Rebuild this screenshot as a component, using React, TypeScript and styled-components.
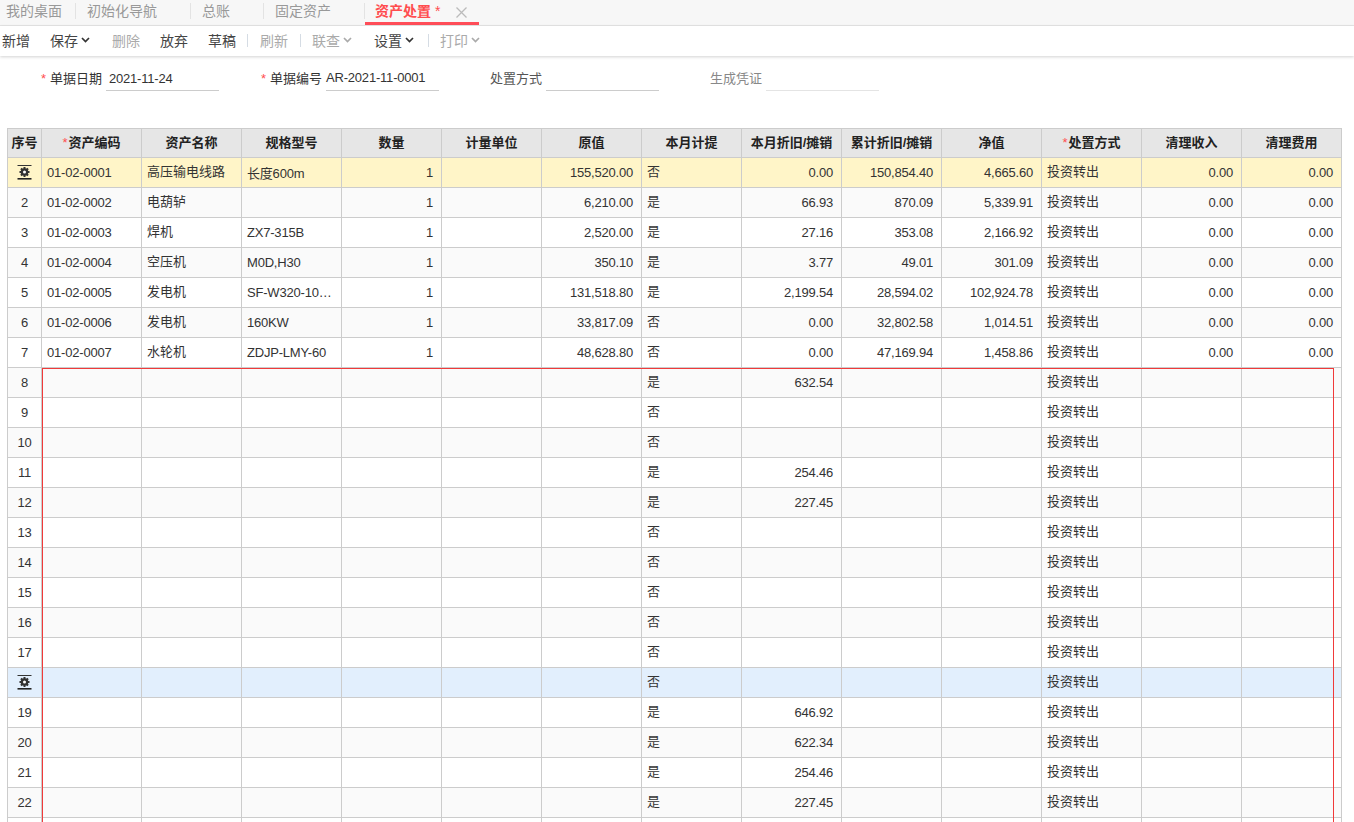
import { createGlobalStyle } from 'styled-components'
import styled from 'styled-components'

const GlobalStyle = createGlobalStyle`
  html, body {
    margin: 0;
    height: 100%;
    overflow: hidden;
    background: #fff;
    font-family: "Liberation Sans", "Noto Sans CJK SC", sans-serif;
    color: #333;
  }
`

const Page = styled.div`
  height: 822px;
  overflow: hidden;
`

const TabBar = styled.div`
  display: flex;
  height: 25px;
  background: #f7f7f7;
  border-bottom: 1px solid #e6e6e6;
`

const Tab = styled.div<{ $width: number; $first?: boolean; $active?: boolean }>`
  position: relative;
  box-sizing: border-box;
  width: ${({ $width }) => $width}px;
  display: flex;
  align-items: flex-start;
  gap: 16px;
  height: 25px;
  line-height: 22px;
  padding-left: ${({ $first, $active }) => ($first ? 6 : $active ? 10 : 11)}px;
  font-size: 14px;
  color: ${({ $active }) => ($active ? '#ff4d4f' : '#999')};
  font-weight: ${({ $active }) => ($active ? 700 : 400)};
  border-bottom: ${({ $active }) => ($active ? '3px solid #ff4d58' : 'none')};

  &::after {
    content: '';
    display: ${({ $active }) => ($active ? 'none' : 'block')};
    position: absolute;
    right: 0;
    top: 3px;
    height: 16px;
    width: 1px;
    background: #e3e3e3;
  }

  svg {
    margin-top: 7px;
  }
`

const TabStar = styled.span`
  font-weight: 400;
  margin-left: 4px;
`

const Toolbar = styled.div`
  display: flex;
  align-items: center;
  box-sizing: border-box;
  height: 30px;
  padding: 0 0 2px 2px;
  background: #fff;
  box-shadow: 0 1px 3px rgba(0, 0, 0, 0.18);
  position: relative;
`

const ToolButton = styled.div<{ $disabled?: boolean; $width: number }>`
  display: flex;
  align-items: center;
  gap: 3px;
  width: ${({ $width }) => $width}px;
  font-size: 14px;
  color: ${({ $disabled }) => ($disabled ? '#aaa' : '#444')};
`

const ToolDivider = styled.div<{ $width: number }>`
  width: ${({ $width }) => $width}px;

  &::before {
    content: '';
    display: block;
    width: 1px;
    height: 13px;
    background: #d5dce4;
  }
`

const FormRow = styled.div`
  display: grid;
  grid-template-columns: repeat(4, 220px);
  height: 72px;
  padding-top: 10px;
  box-sizing: border-box;
`

const Field = styled.div`
  display: flex;
  align-items: flex-start;
  gap: 4px;
  font-size: 13px;
`

const FieldLabel = styled.div<{ $tone?: string }>`
  box-sizing: border-box;
  width: 102px;
  height: 25px;
  line-height: 25px;
  text-align: right;
  color: ${({ $tone }) => $tone || '#333'};
`

const Star = styled.span`
  color: #ff4d4f;
  margin-right: 4px;
`

const HeadStar = styled.span`
  color: #ff4d4f;
  font-weight: 400;
  margin-right: 1px;
`

const FieldInput = styled.div<{ $inset?: number; $line?: string; $raised?: boolean }>`
  box-sizing: border-box;
  width: 113px;
  height: 25px;
  line-height: ${({ $raised }) => ($raised ? 23 : 25)}px;
  padding-left: ${({ $inset }) => $inset ?? 0}px;
  letter-spacing: -0.2px;
  border-bottom: 1px solid ${({ $line }) => $line || '#ccc'};
`

const TableWrap = styled.div`
  position: relative;
  margin-left: 7px;
  width: 1335px;
`

const Grid = styled.table`
  table-layout: fixed;
  border-collapse: collapse;
  width: 1335px;
  font-size: 13px;
`

const HeadCell = styled.th`
  height: 29px;
  padding: 0 0 4px;
  box-sizing: border-box;
  border: 1px solid #ccc;
  background: #e6e6e6;
  font-weight: 700;
  text-align: center;
  color: #222;
`

const Row = styled.tr<{ $bg: string }>`
  background: ${({ $bg }) => $bg};
`

const Cell = styled.td<{ $align?: string; $num?: boolean }>`
  height: 30px;
  padding: 0 8px ${({ $num }) => ($num ? 0 : 4)}px 5px;
  box-sizing: border-box;
  border: 1px solid #ccc;
  text-align: ${({ $align }) => $align || 'left'};
  letter-spacing: ${({ $num }) => ($num ? '-0.2px' : '0')};
  white-space: nowrap;
  overflow: hidden;
  text-overflow: ellipsis;
`

const IndexCell = styled.td`
  height: 30px;
  padding: 0;
  box-sizing: border-box;
  border: 1px solid #ccc;
  text-align: center;
  letter-spacing: -0.2px;
`

const GearBox = styled.svg`
  display: block;
  margin: 0 auto;
`

const SelectionBox = styled.div`
  position: absolute;
  left: 35px;
  top: 240px;
  width: 1292px;
  bottom: 0;
  border: 1px solid #f03a3a;
  box-sizing: border-box;
  pointer-events: none;
`

const Chevron = ({ color }: { color: string }) => (
  <svg width="9" height="6" viewBox="0 0 9 6" fill="none">
    <path d="M1 1l3.5 3.5L8 1" stroke={color} strokeWidth="1.7" />
  </svg>
)

const CloseMark = () => (
  <svg width="11" height="11" viewBox="0 0 11 11" fill="none">
    <path d="M.5.5l10 10M10.5.5l-10 10" stroke="#bbb" strokeWidth="1.3" />
  </svg>
)

const teeth = [0, 45, 90, 135, 180, 225, 270, 315]

const RowGear = () => (
  <GearBox width="15" height="15" viewBox="0 0 15 15">
    <rect x="0.5" y="0" width="14" height="1" fill="#333" />
    <rect x="0.5" y="13" width="14" height="1.6" fill="#222" />
    <circle cx="7.5" cy="7" r="3.8" fill="#333" />
    {teeth.map((a) => (
      <rect key={a} x="6.5" y="2" width="2" height="2.2" fill="#333" transform={`rotate(${a} 7.5 7)`} />
    ))}
    <circle cx="7.5" cy="7" r="1.5" fill="#fff" />
  </GearBox>
)

type Asset = {
  code?: string
  name?: string
  spec?: string
  qty?: string
  origin?: string
  accrue: string
  monthly?: string
  total?: string
  net?: string
  income?: string
  fee?: string
}

const filled: Asset[] = [
  { code: '01-02-0001', name: '高压输电线路', spec: '长度600m', qty: '1', origin: '155,520.00', accrue: '否', monthly: '0.00', total: '150,854.40', net: '4,665.60', income: '0.00', fee: '0.00' },
  { code: '01-02-0002', name: '电葫轳', spec: '', qty: '1', origin: '6,210.00', accrue: '是', monthly: '66.93', total: '870.09', net: '5,339.91', income: '0.00', fee: '0.00' },
  { code: '01-02-0003', name: '焊机', spec: 'ZX7-315B', qty: '1', origin: '2,520.00', accrue: '是', monthly: '27.16', total: '353.08', net: '2,166.92', income: '0.00', fee: '0.00' },
  { code: '01-02-0004', name: '空压机', spec: 'M0D,H30', qty: '1', origin: '350.10', accrue: '是', monthly: '3.77', total: '49.01', net: '301.09', income: '0.00', fee: '0.00' },
  { code: '01-02-0005', name: '发电机', spec: 'SF-W320-10000', qty: '1', origin: '131,518.80', accrue: '是', monthly: '2,199.54', total: '28,594.02', net: '102,924.78', income: '0.00', fee: '0.00' },
  { code: '01-02-0006', name: '发电机', spec: '160KW', qty: '1', origin: '33,817.09', accrue: '否', monthly: '0.00', total: '32,802.58', net: '1,014.51', income: '0.00', fee: '0.00' },
  { code: '01-02-0007', name: '水轮机', spec: 'ZDJP-LMY-60', qty: '1', origin: '48,628.80', accrue: '否', monthly: '0.00', total: '47,169.94', net: '1,458.86', income: '0.00', fee: '0.00' },
]

const blank: Asset[] = [
  { accrue: '是', monthly: '632.54' },
  { accrue: '否' },
  { accrue: '否' },
  { accrue: '是', monthly: '254.46' },
  { accrue: '是', monthly: '227.45' },
  { accrue: '否' },
  { accrue: '否' },
  { accrue: '否' },
  { accrue: '否' },
  { accrue: '否' },
  { accrue: '否' },
  { accrue: '是', monthly: '646.92' },
  { accrue: '是', monthly: '622.34' },
  { accrue: '是', monthly: '254.46' },
  { accrue: '是', monthly: '227.45' },
]

const rows = [...filled, ...blank]

const heads = ['资产编码', '资产名称', '规格型号', '数量', '计量单位', '原值', '本月计提', '本月折旧/摊销', '累计折旧/摊销', '净值', '处置方式', '清理收入', '清理费用']
const required = ['资产编码', '处置方式']

const rowColor = (i: number) => {
  if (i === 0) return '#fff5c8'
  if (i === 17) return '#e2effd'
  return i % 2 === 1 ? '#fafafa' : '#fff'
}

export default function App() {
  return (
    <Page>
      <GlobalStyle />
      <TabBar>
        <Tab $width={76} $first>我的桌面</Tab>
        <Tab $width={115}>初始化导航</Tab>
        <Tab $width={73}>总账</Tab>
        <Tab $width={101}>固定资产</Tab>
        <Tab $width={114} $active>
          <span>资产处置<TabStar>*</TabStar></span>
          <CloseMark />
        </Tab>
      </TabBar>
      <Toolbar>
        <ToolButton $width={48}>新增</ToolButton>
        <ToolButton $width={62}>保存<Chevron color="#333" /></ToolButton>
        <ToolButton $width={48} $disabled>删除</ToolButton>
        <ToolButton $width={48}>放弃</ToolButton>
        <ToolButton $width={39}>草稿</ToolButton>
        <ToolDivider $width={13} />
        <ToolButton $width={40} $disabled>刷新</ToolButton>
        <ToolDivider $width={12} />
        <ToolButton $width={62} $disabled>联查<Chevron color="#aaa" /></ToolButton>
        <ToolButton $width={54}>设置<Chevron color="#333" /></ToolButton>
        <ToolDivider $width={12} />
        <ToolButton $width={60} $disabled>打印<Chevron color="#aaa" /></ToolButton>
      </Toolbar>
      <FormRow>
        <Field>
          <FieldLabel><Star>*</Star>单据日期</FieldLabel>
          <FieldInput $inset={3}>2021-11-24</FieldInput>
        </Field>
        <Field>
          <FieldLabel><Star>*</Star>单据编号</FieldLabel>
          <FieldInput $raised>AR-2021-11-0001</FieldInput>
        </Field>
        <Field>
          <FieldLabel $tone="#555">处置方式</FieldLabel>
          <FieldInput />
        </Field>
        <Field>
          <FieldLabel $tone="#888">生成凭证</FieldLabel>
          <FieldInput $line="#e4e4e4" />
        </Field>
      </FormRow>
      <TableWrap>
        <Grid>
          <colgroup>
            <col width={34} />
            {heads.map((h) => <col key={h} width={100} />)}
          </colgroup>
          <thead>
            <tr>
              <HeadCell>序号</HeadCell>
              {heads.map((h) => (
                <HeadCell key={h}>
                  {required.includes(h) && <HeadStar>*</HeadStar>}
                  {h}
                </HeadCell>
              ))}
            </tr>
          </thead>
          <tbody>
            {rows.map((r, i) => (
              <Row key={i} $bg={rowColor(i)}>
                <IndexCell>{i === 0 || i === 17 ? <RowGear /> : i + 1}</IndexCell>
                <Cell $num>{r.code}</Cell>
                <Cell>{r.name}</Cell>
                <Cell $num>{r.spec}</Cell>
                <Cell $align="right" $num>{r.qty}</Cell>
                <Cell $num />
                <Cell $align="right" $num>{r.origin}</Cell>
                <Cell>{r.accrue}</Cell>
                <Cell $align="right" $num>{r.monthly}</Cell>
                <Cell $align="right" $num>{r.total}</Cell>
                <Cell $align="right" $num>{r.net}</Cell>
                <Cell>投资转出</Cell>
                <Cell $align="right" $num>{r.income}</Cell>
                <Cell $align="right" $num>{r.fee}</Cell>
              </Row>
            ))}
            {/* next row only shows its top border at the fold */}
            <Row $bg="#fff">
              <IndexCell />
              {heads.map((h) => <Cell key={h} $num />)}
            </Row>
          </tbody>
        </Grid>
        <SelectionBox />
      </TableWrap>
    </Page>
  )
}
